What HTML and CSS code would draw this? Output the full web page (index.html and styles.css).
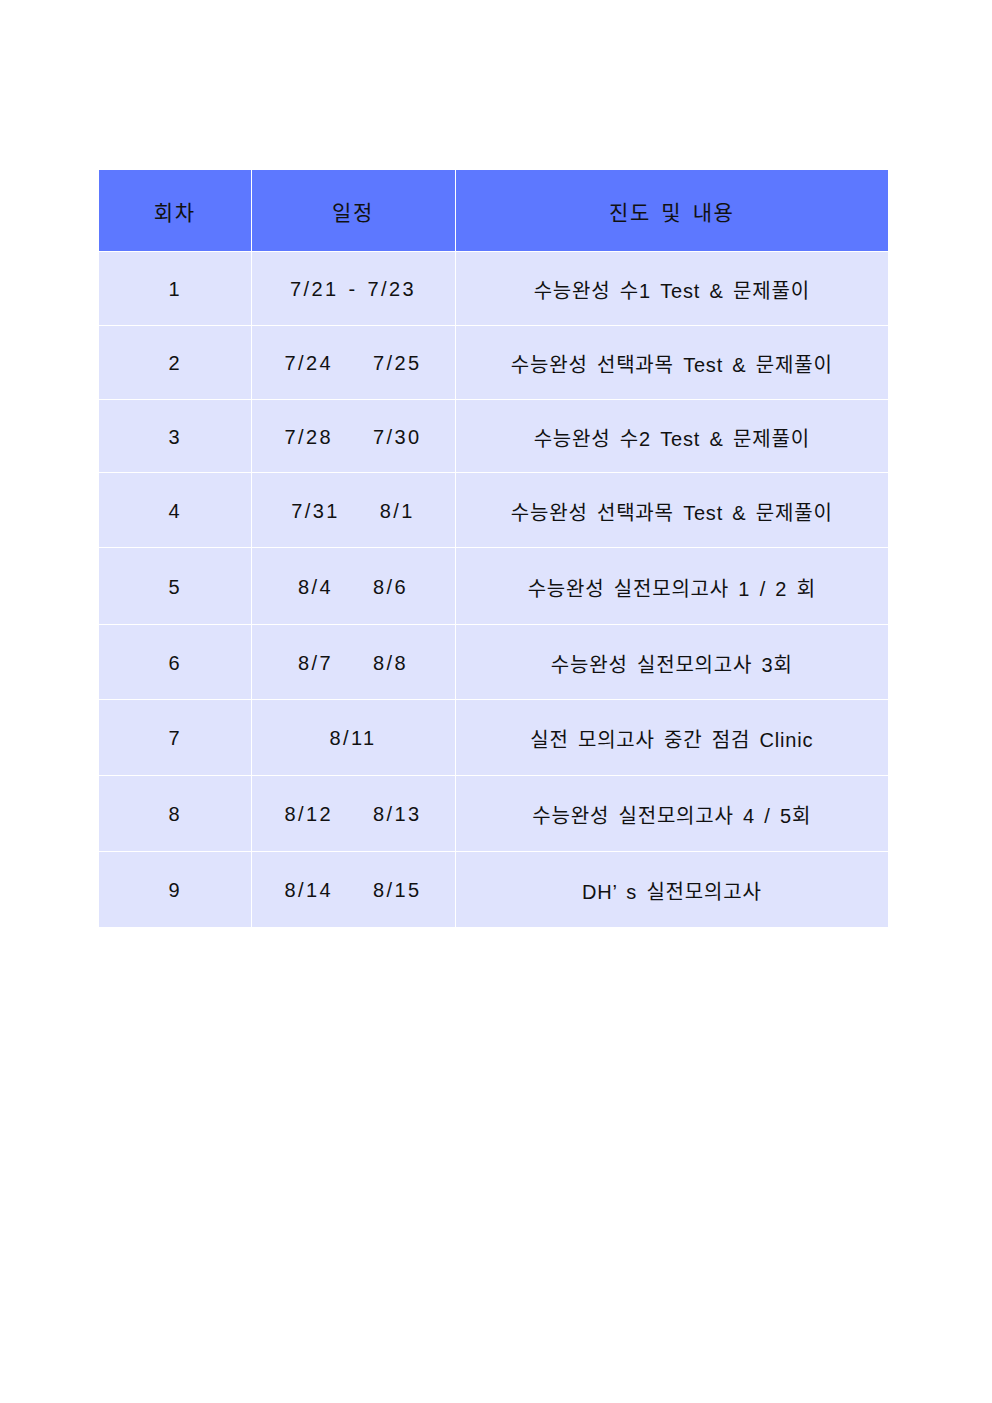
FILE: index.html
```html
<!DOCTYPE html>
<html lang="ko">
<head>
<meta charset="utf-8">
<link rel="stylesheet" href="styles.css">
</head>
<body>
<div class="page">
  <table class="schedule">
    <colgroup>
      <col class="c1"><col class="c2"><col class="c3">
    </colgroup>
    <thead>
      <tr class="head"><th>회차</th><th>일정</th><th>진도 및 내용</th></tr>
    </thead>
    <tbody>
      <tr class="r1"><td>1</td><td class="date">7/21 - 7/23</td><td class="desc">수능완성 수1 Test &amp; 문제풀이</td></tr>
      <tr class="r2"><td>2</td><td class="date">7/24    7/25</td><td class="desc">수능완성 선택과목 Test &amp; 문제풀이</td></tr>
      <tr class="r3"><td>3</td><td class="date">7/28    7/30</td><td class="desc">수능완성 수2 Test &amp; 문제풀이</td></tr>
      <tr class="r4"><td>4</td><td class="date">7/31    8/1</td><td class="desc">수능완성 선택과목 Test &amp; 문제풀이</td></tr>
      <tr class="r5"><td>5</td><td class="date">8/4    8/6</td><td class="desc">수능완성 실전모의고사 1 / 2 회</td></tr>
      <tr class="r6"><td>6</td><td class="date">8/7    8/8</td><td class="desc">수능완성 실전모의고사 3회</td></tr>
      <tr class="r7"><td>7</td><td class="date">8/11</td><td class="desc">실전 모의고사 중간 점검 Clinic</td></tr>
      <tr class="r8"><td>8</td><td class="date">8/12    8/13</td><td class="desc">수능완성 실전모의고사 4 / 5회</td></tr>
      <tr class="r9"><td>9</td><td class="date">8/14    8/15</td><td class="desc">DH’ s 실전모의고사</td></tr>
    </tbody>
  </table>
</div>
</body>
</html>
```

FILE: styles.css
```css
html, body {
  margin: 0;
  padding: 0;
  background: #ffffff;
}
.page {
  padding: 170px 0 0 99px;
}
.schedule {
  border-collapse: collapse;
  table-layout: fixed;
  width: 789px;
  font-family: "Liberation Sans", "Noto Sans CJK KR", sans-serif;
  font-size: 20px;
  color: #111111;
  letter-spacing: 1.6px;
  word-spacing: 3px;
}
.c1 { width: 152px; }
.c2 { width: 204px; }
.c3 { width: 433px; }
.schedule th, .schedule td {
  border: 1px solid #ffffff;
  text-align: center;
  vertical-align: middle;
  padding: 0;
  white-space: pre;
}
.schedule td {
  padding-top: 2px;
}
.schedule tr:first-child th { border-top: none; }
.schedule th:first-child, .schedule td:first-child { border-left: none; }
.schedule th:last-child, .schedule td:last-child { border-right: none; }
.schedule tbody tr:last-child td { border-bottom: none; }
.head th {
  background: #5d78ff;
  height: 81px;
  font-weight: normal;
  font-size: 21px;
}
.schedule td {
  background: #dfe3fd;
}
.schedule td.date {
  letter-spacing: 2.4px;
  word-spacing: 2px;
}
.schedule td.desc {
  letter-spacing: 0.8px;
  word-spacing: 3px;
}
.r1 td, .r2 td { height: 71px; }
.r3 td { height: 70px; }
.r4 td { height: 72px; }
.r5 td { height: 74px; }
.r6 td { height: 72px; }
.r7 td, .r8 td { height: 73px; }
.r9 td { height: 73px; }
```
